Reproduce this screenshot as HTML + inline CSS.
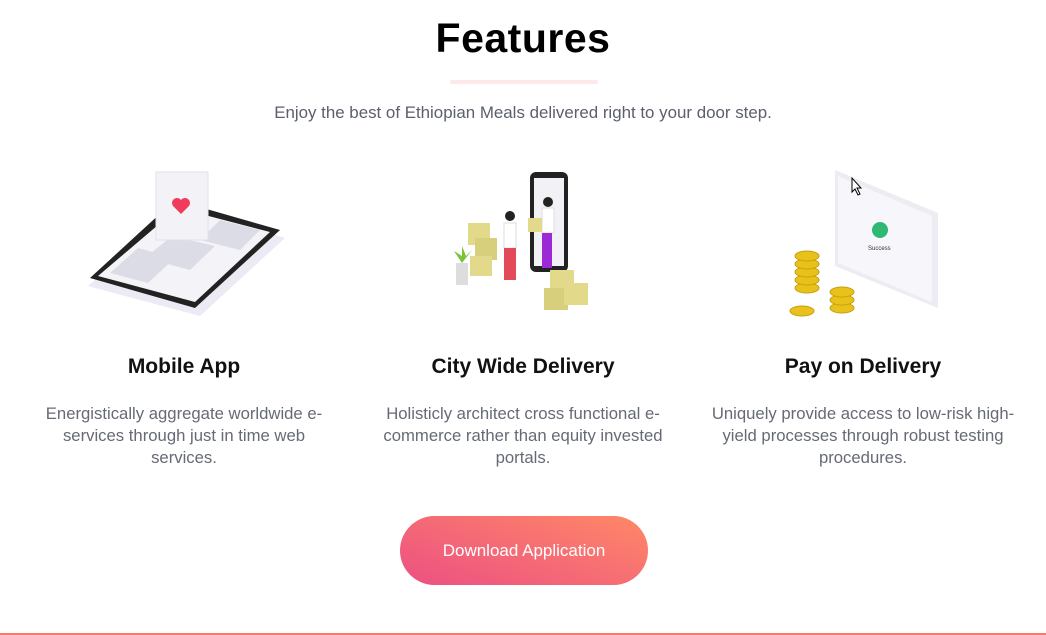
<!DOCTYPE html>
<html><head><meta charset="utf-8"><style>
body{margin:0;width:1046px;height:635px;background:#fff;font-family:"Liberation Sans",sans-serif;position:relative;overflow:hidden}
h1{position:absolute;top:15px;left:0;width:1046px;text-align:center;margin:0;font-size:41px;font-weight:bold;color:#000;letter-spacing:0.5px}
.bar{position:absolute;left:450px;top:80px;width:148px;height:4px;border-radius:2px;background:#fde9e9}
.sub{position:absolute;top:103px;width:1046px;text-align:center;font-size:16.9px;color:#5b5f6e}
.col{position:absolute;top:355px;width:340px;text-align:center;white-space:nowrap}
.col h3{margin:0;font-size:21px;font-weight:bold;color:#111}
.col p{margin:24px 0 0;font-size:16.7px;line-height:22px;color:#666a75}
.btn{position:absolute;left:400px;top:516px;width:248px;height:69px;border-radius:35px;background:linear-gradient(20deg,#ec5083,#ff8866);color:#fff;font-size:17px;text-align:center;line-height:69px}
.line{position:absolute;left:0;top:633px;width:1046px;height:2px;background:#f77a6e}
svg{position:absolute}
</style></head><body>
<h1>Features</h1>
<div class="bar"></div>
<div class="sub">Enjoy the best of Ethiopian Meals delivered right to your door step.</div>

<svg style="left:80px;top:168px" width="210" height="160" viewBox="0 0 210 160">
<polygon points="8,118 120,148 205,70 100,38" fill="#ecebf5"/>
<polygon points="10,110 115,140 200,62 95,32" fill="#222" />
<polygon points="18,108 115,134 190,64 98,40" fill="#f4f4f8"/>
<polygon points="30,105 68,115 95,90 58,80" fill="#dcdce6"/>
<polygon points="65,90 110,102 135,78 92,68" fill="#dcdce6"/>
<polygon points="120,72 160,82 180,62 140,52" fill="#dcdce6"/>
<rect x="76" y="4" width="52" height="68" fill="#f3f3f7" stroke="#e1e1ea"/>
<path d="M101 46 l-8 -8 a5 5 0 0 1 8 -6 a5 5 0 0 1 8 6z" fill="#f03c5a"/>
</svg>

<svg style="left:440px;top:168px" width="160" height="155" viewBox="0 0 160 155">
<rect x="90" y="4" width="38" height="100" rx="6" fill="#222"/>
<rect x="94" y="10" width="30" height="88" fill="#f2f2f6"/>
<rect x="28" y="55" width="22" height="22" fill="#e2d98a"/>
<rect x="35" y="70" width="22" height="22" fill="#d8cf7c"/>
<rect x="30" y="88" width="22" height="20" fill="#e2d98a"/>
<rect x="110" y="102" width="24" height="22" fill="#e2d98a"/>
<rect x="104" y="120" width="24" height="22" fill="#d8cf7c"/>
<rect x="124" y="115" width="24" height="22" fill="#e2d98a"/>
<circle cx="70" cy="48" r="5" fill="#222"/>
<rect x="64" y="55" width="12" height="25" fill="#fff" stroke="#ddd"/>
<rect x="64" y="80" width="12" height="32" fill="#e24a5a"/>
<circle cx="108" cy="34" r="5" fill="#222"/>
<rect x="102" y="40" width="12" height="25" fill="#fff" stroke="#ddd"/>
<rect x="102" y="65" width="10" height="35" fill="#9b2ad6"/>
<rect x="88" y="50" width="14" height="14" fill="#e2d98a"/>
<rect x="16" y="95" width="12" height="22" fill="#ddd"/>
<path d="M22 95 l-8 -12 l8 5 l0 -10 l4 10 l6 -6z" fill="#7cc23b"/>
</svg>

<svg style="left:780px;top:168px" width="165" height="155" viewBox="0 0 165 155">
<polygon points="55,2 158,45 158,140 55,98" fill="#ececf3"/>
<polygon points="58,8 152,48 152,134 58,95" fill="#f7f7fb"/>
<circle cx="100" cy="62" r="8" fill="#2eb872"/>
<text x="88" y="82" font-size="6" fill="#333" font-family="Liberation Sans">Success</text>
<path d="M72 10 l0 14 l3 -3 l3 6 l2 -1 l-3 -6 l4 0z" fill="#fff" stroke="#000"/>
<g fill="#e8c21a" stroke="#c79f0d">
<ellipse cx="27" cy="120" rx="12" ry="5"/><ellipse cx="27" cy="112" rx="12" ry="5"/>
<ellipse cx="27" cy="104" rx="12" ry="5"/><ellipse cx="27" cy="96" rx="12" ry="5"/>
<ellipse cx="27" cy="88" rx="12" ry="5"/>
<ellipse cx="62" cy="140" rx="12" ry="5"/><ellipse cx="62" cy="132" rx="12" ry="5"/>
<ellipse cx="62" cy="124" rx="12" ry="5"/>
<ellipse cx="22" cy="143" rx="12" ry="5"/>
</g>
</svg>

<div class="col" style="left:14px"><h3>Mobile App</h3><p>Energistically aggregate worldwide e-<br>services through just in time web<br>services.</p></div>
<div class="col" style="left:353px"><h3>City Wide Delivery</h3><p>Holisticly architect cross functional e-<br>commerce rather than equity invested<br>portals.</p></div>
<div class="col" style="left:693px"><h3>Pay on Delivery</h3><p>Uniquely provide access to low-risk high-<br>yield processes through robust testing<br>procedures.</p></div>

<div class="btn">Download Application</div>
<div class="line"></div>
</body></html>
